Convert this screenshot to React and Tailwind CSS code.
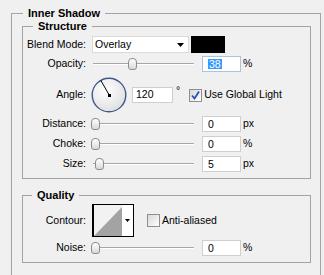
import React from 'react';

const font = "font-['Liberation_Sans',Arial,sans-serif]";

function Thumb({ left }) {
  return (
    <div
      className="absolute top-[2px] h-[12px] w-[9px] rounded-t-[4px] rounded-b-[3px] border border-[#8d8d8d] bg-gradient-to-b from-white to-[#d9d9d9]"
      style={{ left }}
    />
  );
}

function Slider({ thumb }) {
  return (
    <div className="relative h-full w-[104px]">
      <div className="absolute left-[2px] right-[1px] top-[7px] h-[2px] border-t border-b border-t-[#a7a7a7] border-b-white" />
      <Thumb left={thumb} />
    </div>
  );
}

function Field({ value, focused }) {
  return (
    <div
      className={
        'flex h-[16px] w-[39px] items-center bg-white pl-[5px] leading-none ' +
        (focused ? 'border border-[#a8c4e0]' : 'border border-[#cfcfcf]')
      }
    >
      {focused ? <span className="bg-[#3399ff] px-px text-white">{value}</span> : value}
    </div>
  );
}

function Label({ children }) {
  return <div className="w-[63px] shrink-0 text-right">{children}</div>;
}

function SliderRow({ label, thumb, value, unit, focused, className }) {
  return (
    <div className={'flex h-[16px] items-center ' + className}>
      <Label>{label}</Label>
      <div className="ml-[5px] h-full">
        <Slider thumb={thumb} />
      </div>
      <div className="ml-[7px]">
        <Field value={value} focused={focused} />
      </div>
      <span className="ml-[2px]">{unit}</span>
    </div>
  );
}

function Check({ checked }) {
  return (
    <div className="flex h-[13px] w-[13px] items-center justify-center border border-[#8e8f8f] bg-gradient-to-br from-[#d8d8d8] to-white">
      {checked && (
        <svg width="11" height="11" viewBox="0 0 11 11">
          <path d="M2 5.5 L4.5 8.5 L9 1.5" fill="none" stroke="#2b4fb0" strokeWidth="1.8" />
        </svg>
      )}
    </div>
  );
}

function Dial() {
  return (
    <svg width="36" height="36" viewBox="0 0 36 36">
      <defs>
        <radialGradient id="dialg" cx="40%" cy="35%" r="70%">
          <stop offset="0%" stopColor="#ffffff" />
          <stop offset="100%" stopColor="#dedede" />
        </radialGradient>
      </defs>
      <circle cx="18" cy="18" r="16.8" fill="url(#dialg)" stroke="#41598a" strokeWidth="1.4" />
      <line x1="18.5" y1="18.5" x2="9.8" y2="3.4" stroke="#000" strokeWidth="1" />
      <rect x="17" y="17" width="3" height="3" fill="#000" />
    </svg>
  );
}

export default function App() {
  return (
    <div className={'h-[275px] w-[324px] overflow-hidden bg-[#f0f0f0] pt-[6px] text-[10.5px] text-black ' + font}>
      <fieldset className="ml-[11px] w-[310px] border border-[#a3a3a3] pb-[20px] pl-[10px] pr-[9px]">
        <legend className="ml-px px-[5px] text-[11px] font-bold leading-[14px]">Inner Shadow</legend>

        <fieldset className="-mt-px border border-[#a3a3a3] pb-[6px]">
          <legend className="ml-[10px] px-[5px] text-[11px] font-bold leading-[14px]">Structure</legend>

          <div className="mt-[3px] flex h-[17px] items-center">
            <Label>Blend Mode:</Label>
            <div className="ml-[6px] flex h-[17px] w-[97px] items-center justify-between border border-[#dadada] bg-white pl-[2px] pr-[4px]">
              <span>Overlay</span>
              <svg width="7" height="4" viewBox="0 0 7 4">
                <path d="M0 0 H7 L3.5 4 Z" fill="#000" />
              </svg>
            </div>
            <div className="ml-[2px] h-[17px] w-[34px] bg-black" />
          </div>

          <SliderRow className="mt-[3px]" label="Opacity:" thumb={37} value="38" unit="%" focused />

          <div className="mt-[5px] flex h-[36px] items-center">
            <Label>Angle:</Label>
            <div className="ml-[5px]">
              <Dial />
            </div>
            <div className="ml-[5px] flex h-[16px] w-[41px] items-center border border-[#cfcfcf] bg-white pl-[3px]">120</div>
            <span className="ml-[3px] self-start pt-[8px] leading-none">°</span>
            <div className="ml-[9px]">
              <Check checked />
            </div>
            <span className="ml-[2px]">Use Global Light</span>
          </div>

          <SliderRow className="mt-[3px]" label="Distance:" thumb={0} value="0" unit="px" />
          <SliderRow className="mt-[4px]" label="Choke:" thumb={0} value="0" unit="%" />
          <SliderRow className="mt-[4px]" label="Size:" thumb={4} value="5" unit="px" />
        </fieldset>

        <fieldset className="mt-[9px] border border-[#a3a3a3] pb-[6px]">
          <legend className="ml-[9px] px-[5px] text-[11px] font-bold leading-[14px]">Quality</legend>

          <div className="mt-[2px] flex h-[33px] items-center">
            <Label>Contour:</Label>
            <div className="ml-[6px] flex h-[33px] w-[42px] border border-black bg-white">
              <div className="h-full w-[29px] border-l border-black bg-[#f2f2f2]">
                <svg width="28" height="31" viewBox="0 0 28 31">
                  <path d="M0 31 L28 2 L28 31 Z" fill="#a3a3a3" />
                </svg>
              </div>
              <div className="flex flex-1 items-center justify-center">
                <svg width="5" height="3" viewBox="0 0 5 3">
                  <path d="M0 0 H5 L2.5 3 Z" fill="#000" />
                </svg>
              </div>
            </div>
            <div className="ml-[13px]">
              <Check />
            </div>
            <span className="ml-[2px]">Anti-aliased</span>
          </div>

          <SliderRow className="mt-[3px]" label="Noise:" thumb={0} value="0" unit="%" />
        </fieldset>
      </fieldset>
    </div>
  );
}
